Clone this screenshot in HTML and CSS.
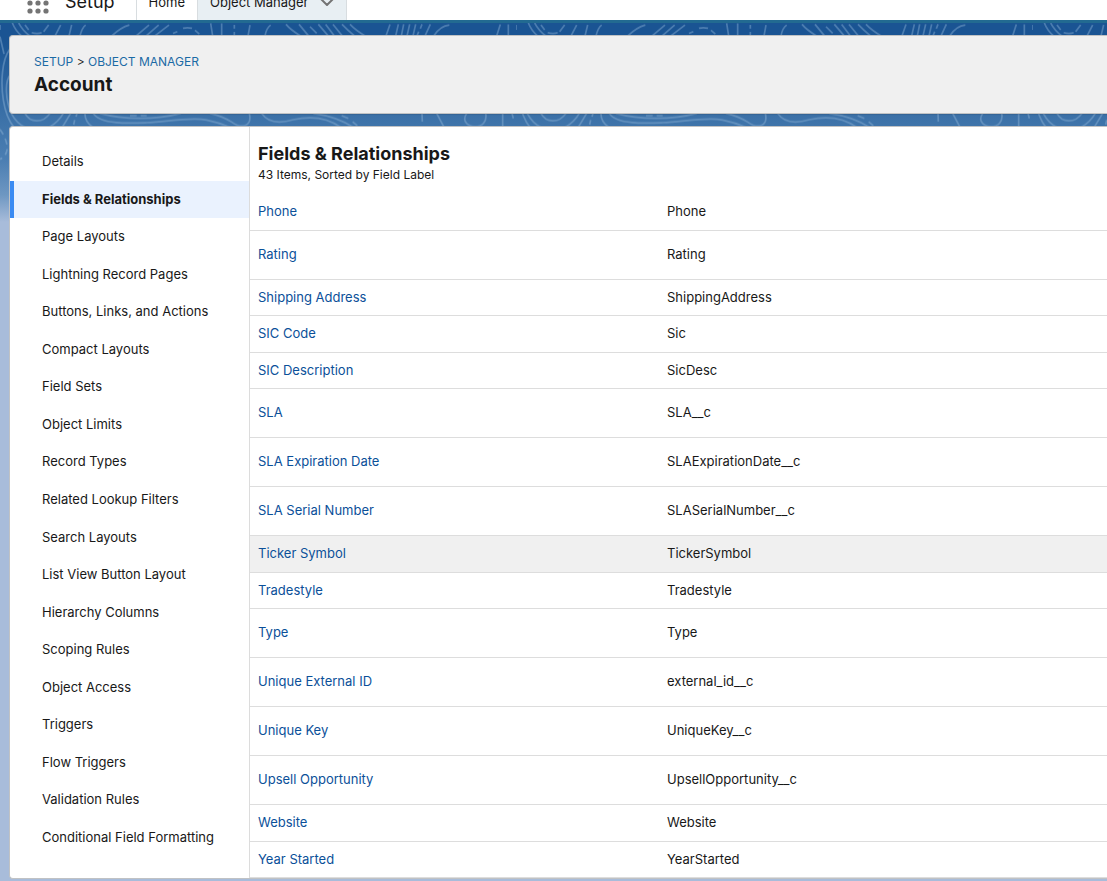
FILE: index.html
```html
<!DOCTYPE html>
<html lang="en">
<head>
<meta charset="utf-8">
<title>Account | Object Manager | Setup</title>
<link rel="stylesheet" href="styles.css">
</head>
<body>
<svg class="backdrop" aria-hidden="true">
  <defs>
    <pattern id="contours" width="1548" height="700" patternUnits="userSpaceOnUse" patternTransform="scale(.33333)">
      <g fill="none" stroke="#9fbfdf" stroke-opacity=".38" stroke-width="5">
        <path d="M37 69Q46 92 65 108M56 69Q68 92 92 110M75 75L86 90M95 98Q112 103 125 98M146 75L131 95M182 75L165 108M215 75L207 108M257 75Q246 83 240 108M388 75Q362 82 335 108M447 75L408 108M476 75L438 108M507 75L464 108M519 100L532 95M549 85Q562 82 576 85M585 91L598 102M632 70L638 108M665 70V108M703 75V86M703 96V108M750 75L744 108M812 75Q799 84 795 108M858 73Q872 90 902 108M897 73L926 108M930 80L950 100M955 73L985 108M977 73L1003 108M999 73L1027 108M1026 73Q1042 90 1064 108M1050 73Q1068 92 1096 108M1170 73L1158 108M1195 73L1187 108M1211 73L1204 108M1229 73L1221 108M1247 73L1239 108M1266 73L1261 86M1256 95L1251 108M1291 73L1275 108M1348 75Q1321 77 1301 108M1501 73L1490 108M1525 73V108"/>
        <path d="M0 110L12 162M0 75V90M29 148C5 180 2 250 10 300Q18 352 42 382M30 225C14 245 16 300 35 342Q50 370 75 382M75 340C90 370 130 370 150 340M190 340Q176 365 148 382M212 340L187 382M231 340L228 350M224 360L221 374M255 340Q254 365 278 382M280 340C300 375 395 370 440 368C500 366 570 350 620 360Q655 367 690 382M300 340C370 360 470 360 542 340M390 347H410M422 347H440M630 340Q665 348 695 366C725 388 757 380 748 340M785 340C805 370 840 371 880 359C940 346 985 355 1022 382M940 340Q1010 350 1060 382M1025 347L1045 355M1058 365L1072 377M1266 340L1267 365M1310 340L1332 382M1400 340C1382 368 1410 380 1426 380C1446 380 1462 365 1457 340M1508 340V382M1536 340L1540 355"/>
        <path d="M0 388Q16 410 21 435Q25 465 0 478" stroke-dasharray="18 14"/>
      </g>
    </pattern>
  </defs>
  <rect width="100%" height="240" fill="url(#contours)"/>
</svg>

<header class="topbar">
  <button class="waffle" type="button" aria-label="App Launcher">
    <svg width="22" height="22" viewBox="0 0 22 22" fill="#747474">
      <circle cx="3" cy="3" r="2.6"/><circle cx="11" cy="3" r="2.6"/><circle cx="19" cy="3" r="2.6"/>
      <circle cx="3" cy="11" r="2.6"/><circle cx="11" cy="11" r="2.6"/><circle cx="19" cy="11" r="2.6"/>
      <circle cx="3" cy="19" r="2.6"/><circle cx="11" cy="19" r="2.6"/><circle cx="19" cy="19" r="2.6"/>
    </svg>
  </button>
  <span class="app-name">Setup</span>
  <nav class="tabs" aria-label="Setup tabs">
    <a class="tab" href="#home">Home</a>
    <div class="tab tab-active">
      <a href="#objects">Object Manager</a>
      <button type="button" aria-label="Object Manager menu">
        <svg width="14" height="8" viewBox="0 0 14 8" fill="none" stroke="#747474" stroke-width="2" stroke-linecap="round" stroke-linejoin="round"><path d="M1 1L7 7L13 1"/></svg>
      </button>
    </div>
  </nav>
</header>

<main class="page">
  <section class="card object-header">
    <p class="breadcrumb"><a href="#setup">SETUP</a> &gt; <a href="#objects">OBJECT MANAGER</a></p>
    <h1>Account</h1>
  </section>

  <div class="card workspace">
    <nav class="sidebar" aria-label="Account">
      <a href="#details">Details</a>
      <a class="current" href="#fields" aria-current="page">Fields &amp; Relationships</a>
      <a href="#layouts">Page Layouts</a>
      <a href="#record-pages">Lightning Record Pages</a>
      <a href="#actions">Buttons, Links, and Actions</a>
      <a href="#compact">Compact Layouts</a>
      <a href="#field-sets">Field Sets</a>
      <a href="#limits">Object Limits</a>
      <a href="#record-types">Record Types</a>
      <a href="#lookup-filters">Related Lookup Filters</a>
      <a href="#search">Search Layouts</a>
      <a href="#list-view">List View Button Layout</a>
      <a href="#hierarchy">Hierarchy Columns</a>
      <a href="#scoping">Scoping Rules</a>
      <a href="#access">Object Access</a>
      <a href="#triggers">Triggers</a>
      <a href="#flow-triggers">Flow Triggers</a>
      <a href="#validation">Validation Rules</a>
      <a href="#formatting">Conditional Field Formatting</a>
    </nav>

    <section class="fields">
      <h2>Fields &amp; Relationships</h2>
      <p class="summary">43 Items, Sorted by Field Label</p>
      <table>
        <tbody>
          <tr class="medium"><td><a href="#f">Phone</a></td><td>Phone</td></tr>
          <tr class="tall"><td><a href="#f">Rating</a></td><td>Rating</td></tr>
          <tr><td><a href="#f">Shipping Address</a></td><td>ShippingAddress</td></tr>
          <tr class="medium"><td><a href="#f">SIC Code</a></td><td>Sic</td></tr>
          <tr><td><a href="#f">SIC Description</a></td><td>SicDesc</td></tr>
          <tr class="tall"><td><a href="#f">SLA</a></td><td>SLA__c</td></tr>
          <tr class="tall"><td><a href="#f">SLA Expiration Date</a></td><td>SLAExpirationDate__c</td></tr>
          <tr class="tall"><td><a href="#f">SLA Serial Number</a></td><td>SLASerialNumber__c</td></tr>
          <tr class="medium highlighted"><td><a href="#f">Ticker Symbol</a></td><td>TickerSymbol</td></tr>
          <tr><td><a href="#f">Tradestyle</a></td><td>Tradestyle</td></tr>
          <tr class="tall"><td><a href="#f">Type</a></td><td>Type</td></tr>
          <tr class="tall"><td><a href="#f">Unique External ID</a></td><td>external_id__c</td></tr>
          <tr class="tall"><td><a href="#f">Unique Key</a></td><td>UniqueKey__c</td></tr>
          <tr class="tall"><td><a href="#f">Upsell Opportunity</a></td><td>UpsellOpportunity__c</td></tr>
          <tr class="medium"><td><a href="#f">Website</a></td><td>Website</td></tr>
          <tr><td><a href="#f">Year Started</a></td><td>YearStarted</td></tr>
        </tbody>
      </table>
    </section>
  </div>
</main>
</body>
</html>
```
FILE: styles.css
```css
* {
  box-sizing: border-box;
}

body {
  position: relative;
  margin: 0;
  background: linear-gradient(#1a5493 0, #1a5493 40px, #3f74aa 125px, #4b7eb2 160px, #6e97c2 195px, #a8bcda 222px) #a8bcda;
  color: #181818;
  font: 13px/20px Inter, "Liberation Sans", sans-serif;
}

h1,
h2,
p {
  margin: 0;
}

a {
  color: inherit;
  text-decoration: none;
}

button {
  display: flex;
  padding: 0;
  border: 0;
  background: none;
}

.backdrop {
  position: absolute;
  inset: 0;
  z-index: -1;
  width: 100%;
  height: 240px;
}

.topbar {
  display: flex;
  align-items: flex-end;
  height: 23px;
  overflow: hidden;
  padding-left: 27px;
  border-bottom: 3px solid #226a91;
  background: #fff;
}

.waffle {
  padding-bottom: 6px;
}

.app-name {
  padding: 0 21px 6px 16px;
  font-size: 18px;
  line-height: 24px;
}

.tabs {
  display: flex;
  border-left: 1px solid #d8dde0;
}

.tab {
  display: flex;
  align-items: center;
  height: 36px;
  padding: 0 12px;
}

.tab-active {
  gap: 12px;
  border: solid #d8dde0;
  border-width: 0 1px;
  background: #e8eff3;
}

.page {
  display: grid;
  gap: 12px;
  padding: 12px 0 3px 9px;
}

.card {
  border: 1px solid #c0c2c4;
  border-right: 0;
  border-radius: 4px 0 0 4px;
  background: #fff;
}

.object-header {
  padding: 16px 24px;
  background: #f0f0f0;
  box-shadow: 0 1px 1px rgba(0, 0, 0, .1);
}

.breadcrumb {
  font-size: 12px;
}

.breadcrumb a {
  color: #1b6aa5;
}

h1 {
  font-size: 19px;
  font-weight: 700;
  line-height: 25px;
}

.workspace {
  display: grid;
  grid-template-columns: 240px 1fr;
}

.sidebar {
  display: grid;
  grid-auto-rows: 1fr;
  padding: 16px 0 22px;
  border-right: 1px solid #dcdcdc;
}

.sidebar a {
  display: flex;
  align-items: center;
  padding: 0 28px 1px;
  border-left: 4px solid transparent;
}

.sidebar .current {
  border-color: #3b8bf2;
  background: #eaf2fe;
  font-weight: 700;
}

h2 {
  padding: 15px 8px 0;
  font-size: 18px;
  font-weight: 700;
  line-height: 23px;
}

.summary {
  padding: 0 8px 9px;
  font-size: 12px;
  line-height: 20px;
}

table {
  width: 100%;
  border-collapse: separate;
  border-spacing: 0;
  table-layout: fixed;
}

td {
  height: 36px;
  padding: 0 8px 2px;
  border-bottom: 1px solid #dddddd;
}

td:first-child {
  width: 409px;
}

td a {
  color: #0b5099;
}

.medium td {
  height: 37px;
}

.tall td {
  height: 49px;
}

.highlighted td {
  background: #f0f0f0;
}
```
